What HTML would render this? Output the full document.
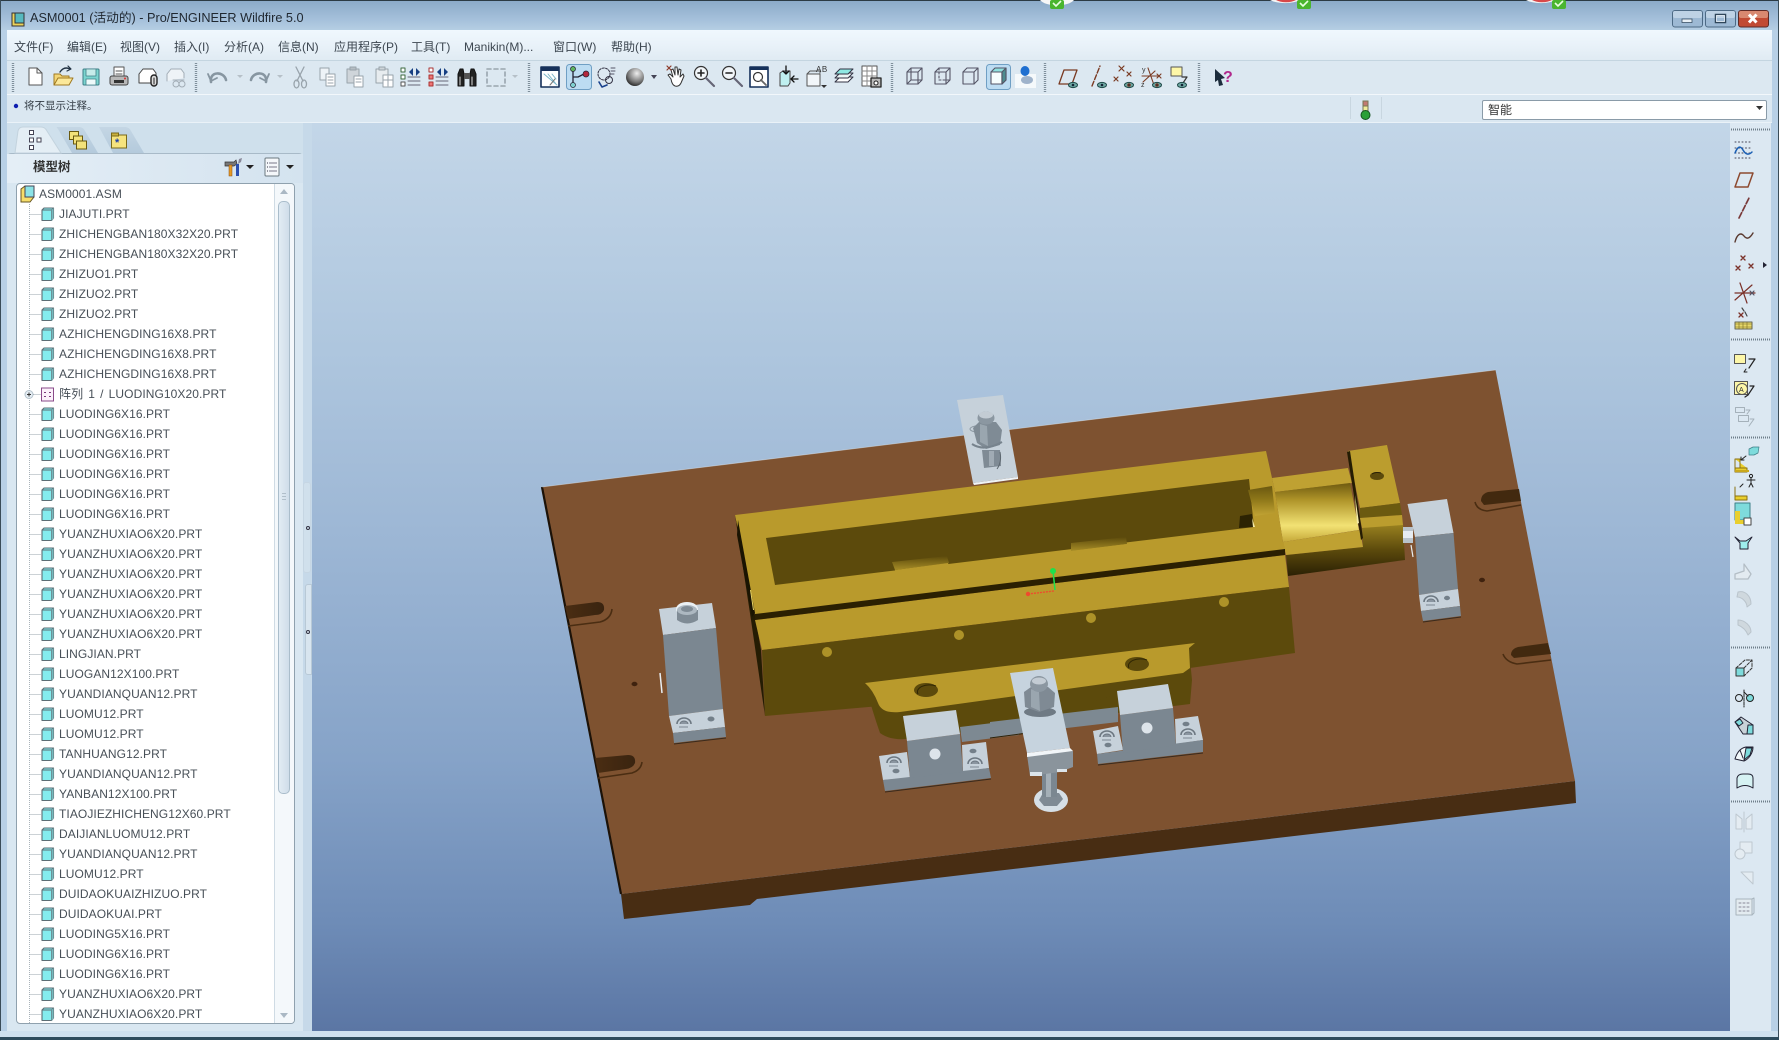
<!DOCTYPE html>
<html lang="zh"><head><meta charset="utf-8"><title>ASM0001 - Pro/ENGINEER Wildfire 5.0</title>
<style>
html,body{margin:0;padding:0;width:1779px;height:1040px;overflow:hidden;background:#b8d0e6;font-family:"Liberation Sans","Noto Sans CJK SC",sans-serif}
#root{position:absolute;left:0;top:0;width:1779px;height:1040px;overflow:hidden;filter:blur(.35px)}
.a{position:absolute}
svg{position:absolute;left:0;top:0;overflow:visible}
.m{position:absolute;top:39px;font-size:12px;line-height:17px;color:#3c4650;white-space:nowrap}
#tree div{height:20px;line-height:20px;font-size:12px;letter-spacing:.08px;color:#474f57;white-space:nowrap;padding-left:43px}
</style></head><body><div id="root">
<div class="a" style="left:0;top:0;width:1779px;height:1040px;background:#b8d0e6"></div>
<!-- title -->
<div class="a" style="left:0;top:0;width:1779px;height:30px;background:linear-gradient(#8aa9c8,#a7c2dc 70%,#b5cee3)"></div>
<div class="a" style="left:0;top:0;width:1779px;height:1px;background:#2b3a44"></div>
<div class="a" style="left:30px;top:9px;font-size:12.7px;line-height:18px;color:#1f2730;white-space:nowrap">ASM0001 (活动的) - Pro/ENGINEER Wildfire 5.0</div>
<!-- menu -->
<div class="a" style="left:7px;top:30px;width:1765px;height:30px;background:linear-gradient(#f0f8fe,#e9f2f9 50%,#e0ebf3)"></div>
<div class="a" style="left:7px;top:60px;width:1765px;height:1px;background:#c4d5e0"></div>
<div class="m" style="left:14px">文件(F)</div><div class="m" style="left:67px">编辑(E)</div><div class="m" style="left:120px">视图(V)</div><div class="m" style="left:174px">插入(I)</div><div class="m" style="left:224px">分析(A)</div><div class="m" style="left:278px">信息(N)</div><div class="m" style="left:334px">应用程序(P)</div><div class="m" style="left:411px">工具(T)</div><div class="m" style="left:464px">Manikin(M)...</div><div class="m" style="left:553px">窗口(W)</div><div class="m" style="left:611px">帮助(H)</div>
<!-- toolbar + status -->
<div class="a" style="left:7px;top:61px;width:1765px;height:33px;background:#dce8f1"></div>
<div class="a" style="left:7px;top:94px;width:1765px;height:1px;background:#f2f7fb"></div>
<div class="a" style="left:7px;top:95px;width:1765px;height:27px;background:#dae7f1"></div>
<div class="a" style="left:7px;top:122px;width:1765px;height:1px;background:#eaf2f8"></div>
<div class="a" style="left:24px;top:98px;font-size:10.5px;line-height:17px;color:#333c45;white-space:nowrap">将不显示注释。</div>
<div class="a" style="left:1482px;top:100px;width:283px;height:18px;background:#fff;border:1px solid #8a9ba8;border-radius:2px;font-size:12px;line-height:18px;color:#333;text-indent:5px">智能</div>
<!-- canvas -->
<div class="a" style="left:312px;top:123px;width:1418px;height:908px;background:linear-gradient(#c3d6e8 0,#aec6de 25%,#9db7d5 45%,#86a3c8 70%,#6e8cb7 88%,#5b76a4 100%)"></div>
<!-- right toolbar -->
<div class="a" style="left:1730px;top:123px;width:41px;height:908px;background:#dce8f2"></div>
<!-- left panel -->
<div class="a" style="left:7px;top:123px;width:296px;height:908px;background:#cfe0ec"></div>
<div class="a" style="left:303px;top:123px;width:9px;height:908px;background:#c6d9e9"></div>
<div class="a" style="left:303px;top:482px;width:8px;height:91px;background:#d0e0ec;border-radius:3px;border:1px solid #c6d6e3;box-sizing:border-box"></div>
<div class="a" style="left:305px;top:584px;width:7px;height:91px;background:#d8e5ef;border-radius:3px 0 0 3px;border:1px solid #b8c9d6;box-sizing:border-box"></div>
<div class="a" style="left:7px;top:153px;width:296px;height:878px;background:#d9e7f1;border-top:1px solid #a8bac8;border-radius:4px 4px 0 0;box-sizing:border-box"></div>
<div class="a" style="left:7px;top:154px;width:296px;height:29px;background:linear-gradient(90deg,#e4eef6,#d4e3ef)"></div>
<div class="a" style="left:33px;top:158px;font-size:12.5px;line-height:18px;font-weight:bold;color:#333">模型树</div>
<div class="a" style="left:16px;top:183px;width:279px;height:841px;background:#fff;border:1px solid #8fa1ae;border-radius:4px;box-sizing:border-box"></div>
<div class="a" style="left:274px;top:184px;width:20px;height:839px;background:#f4f8fb;border-left:1px solid #cfdbe4;box-sizing:border-box;border-radius:0 3px 3px 0"></div>
<div class="a" style="left:278px;top:201px;width:12px;height:593px;background:linear-gradient(90deg,#e2ecf4,#cfdde9);border:1px solid #aabdcb;border-radius:5px;box-sizing:border-box"></div>
<div id="tree" class="a" style="left:16px;top:184px;width:258px;height:839px;overflow:hidden">
<div style="padding-left:23px">ASM0001.ASM</div>
<div>JIAJUTI.PRT</div><div>ZHICHENGBAN180X32X20.PRT</div><div>ZHICHENGBAN180X32X20.PRT</div><div>ZHIZUO1.PRT</div><div>ZHIZUO2.PRT</div><div>ZHIZUO2.PRT</div><div>AZHICHENGDING16X8.PRT</div><div>AZHICHENGDING16X8.PRT</div><div>AZHICHENGDING16X8.PRT</div><div style="word-spacing:1.7px">阵列 1 / LUODING10X20.PRT</div><div>LUODING6X16.PRT</div><div>LUODING6X16.PRT</div><div>LUODING6X16.PRT</div><div>LUODING6X16.PRT</div><div>LUODING6X16.PRT</div><div>LUODING6X16.PRT</div><div>YUANZHUXIAO6X20.PRT</div><div>YUANZHUXIAO6X20.PRT</div><div>YUANZHUXIAO6X20.PRT</div><div>YUANZHUXIAO6X20.PRT</div><div>YUANZHUXIAO6X20.PRT</div><div>YUANZHUXIAO6X20.PRT</div><div>LINGJIAN.PRT</div><div>LUOGAN12X100.PRT</div><div>YUANDIANQUAN12.PRT</div><div>LUOMU12.PRT</div><div>LUOMU12.PRT</div><div>TANHUANG12.PRT</div><div>YUANDIANQUAN12.PRT</div><div>YANBAN12X100.PRT</div><div>TIAOJIEZHICHENG12X60.PRT</div><div>DAIJIANLUOMU12.PRT</div><div>YUANDIANQUAN12.PRT</div><div>LUOMU12.PRT</div><div>DUIDAOKUAIZHIZUO.PRT</div><div>DUIDAOKUAI.PRT</div><div>LUODING5X16.PRT</div><div>LUODING6X16.PRT</div><div>LUODING6X16.PRT</div><div>YUANZHUXIAO6X20.PRT</div><div>YUANZHUXIAO6X20.PRT</div>
</div>

<svg width="1779" height="1040" viewBox="0 0 1779 1040" xmlns="http://www.w3.org/2000/svg">
<defs>
<linearGradient id="cyl" x1="0" y1="0" x2="0" y2="1"><stop offset="0" stop-color="#6e5a10"/><stop offset=".28" stop-color="#ae9328"/><stop offset=".72" stop-color="#f2e274"/><stop offset="1" stop-color="#c5a838"/></linearGradient>
<linearGradient id="bod" x1="0" y1="0" x2="0" y2="1"><stop offset="0" stop-color="#9a8220"/><stop offset=".5" stop-color="#5c4a0c"/><stop offset="1" stop-color="#2a2004"/></linearGradient>
<linearGradient id="bump" x1="0" y1="0" x2="0" y2="1"><stop offset="0" stop-color="#5c4a0c"/><stop offset="1" stop-color="#a68c26"/></linearGradient>
<linearGradient id="pc" x1="0" y1="0" x2="0" y2="1"><stop offset="0" stop-color="#6b5810"/><stop offset=".45" stop-color="#8e7719"/><stop offset="1" stop-color="#c2a434"/></linearGradient>
<linearGradient id="sl" x1="0" y1="0" x2="1" y2="0"><stop offset="0" stop-color="#4a2d12"/><stop offset="1" stop-color="#3a2410"/></linearGradient>
<radialGradient id="sp" cx=".6" cy=".3" r=".8"><stop offset="0" stop-color="#eee"/><stop offset=".6" stop-color="#777"/><stop offset="1" stop-color="#111"/></radialGradient>
<linearGradient id="tb" x1="0" y1="0" x2="0" y2="1"><stop offset="0" stop-color="#c4d6e4"/><stop offset="1" stop-color="#b4cadc"/></linearGradient>
<g id="c"><path d="M29.5 0H41" stroke="#9aa5ad" stroke-dasharray="1 1" fill="none"/><path d="M42 -4.5l2-2h9.5v10l-2 2.5H42z" fill="#84ecee" stroke="#5d6d74" stroke-width="1.1" stroke-linejoin="round"/><path d="M51.5 -4.5V6.5M42 -4.5h9.5l2-2" fill="none" stroke="#5d6d74"/><path d="M51.5 -4.5l2-2V4l-2 2.5z" fill="#77b9bd"/></g>
<g id="eye"><ellipse cx="0" cy="0" rx="4.5" ry="2.6" fill="#6fa8a4" stroke="#1f4a48" stroke-width="1"/><circle r="1.3" fill="#123"/></g>
<g id="boltf"><path d="M-7 2a7 6 0 0 1 14 0" fill="none" stroke="#6c7781" stroke-width="1.6"/><path d="M-4 2a4 3 0 0 1 8 0" fill="#8a95a0" stroke="#6c7781"/><path d="M-5 5h9" stroke="#7c8791"/></g>
</defs>

<!-- notification tips on top edge -->
<g>
<path d="M1040 0a18 8 0 0 0 34 0z" fill="#f7f7f7"/>
<rect x="1050" y="0" width="14" height="9" rx="2" fill="#4ab52e"/><path d="M1053 3l3 3 5-5" stroke="#e8ffe0" stroke-width="1.6" fill="none"/>
<path d="M1270 0a18 7 0 0 0 30 0z" fill="#f5f5f5"/><path d="M1276 0a12 5 0 0 0 20 0z" fill="#d8484a"/>
<rect x="1297" y="0" width="14" height="9" rx="2" fill="#4ab52e"/><path d="M1300 3l3 3 5-5" stroke="#e8ffe0" stroke-width="1.6" fill="none"/>
<path d="M1526 0a18 7 0 0 0 30 0z" fill="#f5f5f5"/><path d="M1532 0a12 5 0 0 0 20 0z" fill="#d8484a"/>
<rect x="1552" y="0" width="14" height="9" rx="2" fill="#4ab52e"/><path d="M1555 3l3 3 5-5" stroke="#e8ffe0" stroke-width="1.6" fill="none"/>
</g>
<!-- title icon -->
<rect x="12" y="13" width="12" height="13" fill="#ecd35a" stroke="#333"/><rect x="15" y="13" width="9" height="10" fill="#56b9bf" stroke="#333"/>
<!-- window controls -->
<g>
<rect x="1672.5" y="10.5" width="30" height="16.5" rx="2.5" fill="#9db9d4" stroke="#4d6a85"/><rect x="1673" y="11" width="29" height="7" rx="2" fill="#bed2e5"/><rect x="1682" y="19" width="10" height="3.5" fill="#e8f0f6" stroke="#3b5267" stroke-width=".8"/>
<rect x="1705.5" y="10.5" width="30" height="16.5" rx="2.5" fill="#9db9d4" stroke="#4d6a85"/><rect x="1706" y="11" width="29" height="7" rx="2" fill="#bed2e5"/><rect x="1715.5" y="14.5" width="10" height="8" fill="none" stroke="#2f465a" stroke-width="1.5"/><rect x="1716.5" y="15.5" width="8" height="6" fill="none" stroke="#eaf2f8" stroke-width=".8"/>
<rect x="1738.5" y="10.5" width="30" height="16.5" rx="2.5" fill="#c14a33" stroke="#5d2a26"/><rect x="1739" y="11" width="29" height="7" rx="2" fill="#d88870"/><path d="M1749 14.5l7.5 8M1756.5 14.5l-7.5 8" stroke="#fff" stroke-width="3"/>
</g>

<!-- toolbar separators -->
<g stroke="#7f8f9b" stroke-width="2.4" stroke-dasharray="1 1" fill="none">
<path d="M13 63v29M196 63v29M529 63v29M892 63v29M1045 63v29M1199 63v29"/>
</g>
<rect x="566.5" y="64.5" width="25" height="25" rx="3" fill="#bcdcf2" stroke="#6f9fc4"/>
<rect x="986.5" y="64.5" width="24" height="25" rx="3" fill="#bcdcf2" stroke="#6f9fc4"/>
<!-- toolbar icons -->
<g stroke-linejoin="round" stroke-linecap="round" fill="none">
<g transform="translate(35,77)"><path d="M-6-9h8l5 5V8H-6z" fill="#fff" stroke="#555" stroke-width="1"/><path d="M2-9v5h5" stroke="#555"/></g>
<g transform="translate(63,77)"><path d="M-9 8V-3h6l2 2H6V8z" fill="#f3d676" stroke="#a07a22"/><path d="M-9 8l4-7H10L6 8z" fill="#fbe89a" stroke="#a07a22"/><path d="M-3-5Q1-11 7-8" stroke="#234" stroke-width="1.4"/><path d="M5-11l3 3-4 2" stroke="#234" stroke-width="1.2"/></g>
<g transform="translate(91,77)"><rect x="-8" y="-8" width="16" height="16" rx="1" fill="#7bd4cf" stroke="#3e7e86"/><rect x="-5" y="-8" width="10" height="7" fill="#c6ecea" stroke="#3e7e86" stroke-width=".8"/><rect x="-5" y="2" width="10" height="6" fill="#eefafa" stroke="#3e7e86" stroke-width=".8"/></g>
<g transform="translate(119,77)"><rect x="-5" y="-10" width="10" height="10" fill="#fff" stroke="#555"/><path d="M-3-6h6M-3-3h6" stroke="#555"/><rect x="-9" y="-1" width="18" height="9" rx="2" fill="#b8b8b8" stroke="#444"/><rect x="-5" y="3" width="10" height="3" fill="#333"/><circle cx="6" cy="1.5" r="1" fill="#d33"/></g>
<g transform="translate(148,77)"><path d="M-9 6V-3l4-5H5l3 4v10z" fill="#fff" stroke="#444"/><rect x="3" y="-2" width="6" height="11" rx="3" fill="#ddd" stroke="#222" stroke-width="1.4"/><path d="M6 1v6" stroke="#222"/></g>
<g transform="translate(176,77)" stroke="#a2adb6"><path d="M-9 4V-3l4-5H5l3 4v5" fill="#eef3f7"/><circle cx="0" cy="7" r="3"/><circle cx="6" cy="7" r="3"/><path d="M-3 3H8"/></g>
<g transform="translate(218,77)" stroke="#8796a1" stroke-width="2.6"><path d="M-7 5C-9-6 6-6 8 3"/><path d="M-10 -3l3 7 6-3" stroke-width="1.8"/></g><path d="M237 75l3 3 3-3z" fill="#b6c0c8"/>
<g transform="translate(259,77)" stroke="#8796a1" stroke-width="2.6"><path d="M7 5C9-6-6-6-8 3"/><path d="M10 -3l-3 7-6-3" stroke-width="1.8"/></g><path d="M277 75l3 3 3-3z" fill="#b6c0c8"/>
<g transform="translate(300,77)" stroke="#98a3ab" stroke-width="1.3"><path d="M-4-10L3 4M4-10L-3 4"/><ellipse cx="-3.5" cy="7" rx="2.5" ry="4"/><ellipse cx="4" cy="7" rx="2.5" ry="4"/></g>
<g transform="translate(328,77)" stroke="#98a3ab"><rect x="-8" y="-9" width="9" height="12" fill="#eef3f7"/><rect x="-2" y="-3" width="9" height="12" fill="#fff"/><path d="M0 0h5M0 3h5M0 6h5"/></g>
<g transform="translate(355,77)" stroke="#98a3ab"><rect x="-8" y="-8" width="12" height="14" fill="#cfd5da"/><rect x="-5" y="-10" width="6" height="3" fill="#b5bdc3"/><rect x="-1" y="-1" width="9" height="11" fill="#fff"/><path d="M1 2h5M1 5h5"/></g>
<g transform="translate(384,77)" stroke="#98a3ab"><rect x="-8" y="-8" width="12" height="14" fill="#e7ecef"/><rect x="-5" y="-10" width="6" height="3" fill="#cdd4d9"/><rect x="-1" y="-2" width="10" height="12" fill="#fff"/><path d="M4-1v10M-1 3h10"/></g>
<g transform="translate(411,77)"><rect x="-10" y="-9" width="4" height="4" fill="#fff" stroke="#3e6a40"/><rect x="-10" y="-2" width="4" height="4" fill="#fff" stroke="#3e6a40"/><rect x="-10" y="5" width="4" height="4" fill="#fff" stroke="#555"/><path d="M-3 0h12M-3 4h12M-3 8h12" stroke="#667"/><path d="M-2-5l4-4v8zM9-5L5-9v8z" fill="#163f82"/></g>
<g transform="translate(439,77)"><rect x="-10" y="-9" width="4" height="4" fill="#fff" stroke="#a33"/><rect x="-10" y="-2" width="4" height="4" fill="#e77" stroke="#a33"/><rect x="-10" y="5" width="4" height="4" fill="#e77" stroke="#a33"/><path d="M-3 0h12M-3 4h12M-3 8h12" stroke="#667"/><path d="M-2-5l4-4v8zM9-5L5-9v8z" fill="#163f82"/></g>
<g transform="translate(467,77)"><path d="M-9 9V-3l2-5h3l1 5V9zM3 9V-3l1-5h3l2 5V9z" fill="#222" stroke="#111"/><rect x="-3" y="-4" width="6" height="6" fill="#555"/><path d="M-7 8V0M5 8V0" stroke="#ddd"/></g>
<g transform="translate(496,77)" stroke="#99a5ae" stroke-width="1.6" stroke-dasharray="4 3"><rect x="-9" y="-8" width="18" height="17"/></g><path d="M512 75l3 3 3-3z" fill="#b6c0c8"/>
<g transform="translate(550,77)"><rect x="-9" y="-10" width="18" height="20" fill="#fff" stroke="#15305a" stroke-width="1.6"/><rect x="-9" y="-10" width="18" height="4" fill="#15305a"/><path d="M-6 -3L7 8M-2-3L6 7M2-3L6 2" stroke="#7cb6c8"/><path d="M0 8l5-6" stroke="#777"/></g>
<g transform="translate(579,77)"><path d="M-6-6v6h5M-6 0v6M-1 0L5-3" stroke="#223" stroke-width="1.3"/><circle cx="-6" cy="-8" r="2.5" fill="#5fb35f" stroke="#223" stroke-width=".7"/><circle cx="-6" cy="8" r="2.5" fill="#7fd0d0" stroke="#223" stroke-width=".7"/><circle cx="7" cy="-3" r="3" fill="#b3273c" stroke="#223" stroke-width=".7"/></g>
<g transform="translate(607,77)"><circle cx="-3" cy="-3" r="6" stroke="#334" stroke-dasharray="2 1.3"/><path d="M4-9h4M4-6h4M4-3h3" stroke="#556"/><path d="M-8 5l3 5 5-2" stroke="#19418c" stroke-width="1.6"/><circle cx="2" cy="3" r="3.5" stroke="#334"/></g>
<circle cx="635" cy="77" r="9" fill="url(#sp)"/><path d="M651 75l6 0-3 4z" fill="#445"/>
<g transform="translate(676,77)"><path d="M-5 2l-3-4 2-1 3 3-2-7 2-1 2 6 0-8h2l1 8 1-6 2 1-1 7 3-3 1 2-3 7q-2 4-6 3-3-1-4-7z" fill="#fff" stroke="#333" stroke-width="1"/><path d="M-9-11l4 4M-5-11l-4 4" stroke="#8d3a2a" stroke-width="1.2"/></g>
<g transform="translate(704,77)"><circle cx="-3" cy="-4" r="6.5" fill="#f2f6f9" stroke="#333" stroke-width="1.2"/><path d="M-6-4h6M-3-7v6" stroke="#222" stroke-width="1.6"/><path d="M2 1l8 8" stroke="#667" stroke-width="2.2"/></g>
<g transform="translate(732,77)"><circle cx="-3" cy="-4" r="6.5" fill="#f2f6f9" stroke="#333" stroke-width="1.2"/><path d="M-6-4h6" stroke="#222" stroke-width="1.6"/><path d="M2 1l8 8" stroke="#667" stroke-width="2.2"/></g>
<g transform="translate(759,77)"><rect x="-9" y="-10" width="18" height="20" fill="#fff" stroke="#15305a" stroke-width="1.6"/><rect x="-9" y="-10" width="18" height="3" fill="#15305a"/><circle cx="-1" cy="0" r="4.5" stroke="#333" stroke-width="1.2"/><path d="M2 3l5 5" stroke="#666" stroke-width="1.8"/></g>
<g transform="translate(787,77)"><path d="M-7-4l3-2h7v12l-2 3h-8z" fill="#bff0f0" stroke="#444"/><path d="M-1-11v8M-4-6l3 3 3-3M4 2h7M7-1l-3 3 3 3" stroke="#111" stroke-width="1.3"/></g>
<g transform="translate(816,77)"><rect x="-9" y="-3" width="13" height="12" fill="#f2f6f9" stroke="#555"/><path d="M-9-3l3-3h10v2" stroke="#555"/><text x="0" y="-5" font-size="8" fill="#333" font-family="Liberation Sans" style="letter-spacing:.5px">AB</text><path d="M5 8h6l-3 3z" fill="#333"/></g>
<g transform="translate(844,77)" stroke="#334"><path d="M-9 5l5-5H9L4 5z" fill="#fff"/><path d="M-9 1l5-5H9L4 1z" fill="#eaf5f5"/><path d="M-9-3l5-5H9L4-3z" fill="#8fe9e3"/></g>
<g transform="translate(871,77)"><rect x="-9" y="-11" width="15" height="20" fill="#fff" stroke="#555"/><path d="M-9-6H6M-9-1H6M-9 4H6M-4-11V9M1-11V9" stroke="#888"/><rect x="0" y="1" width="10" height="9" fill="#bbb" stroke="#222" stroke-width="1.3"/><circle cx="5" cy="6" r="2" fill="#fff" stroke="#222"/></g>
<g stroke="#556" stroke-width="1.1">
<g transform="translate(914,77)"><rect x="-7" y="-5" width="11" height="12"/><path d="M-7-5l4-4H8V3L4 7M4-5l4-4M-3-9V3h11M-3 3l-4 4"/></g>
<g transform="translate(942,77)"><rect x="-7" y="-5" width="11" height="12"/><path d="M-7-5l4-4H8V3L4 7M4-5l4-4" /><path d="M-3-9V3h11" stroke-dasharray="2 2"/></g>
<g transform="translate(970,77)"><rect x="-7" y="-5" width="11" height="12"/><path d="M-7-5l4-4H8V3L4 7M4-5l4-4"/></g>
<g transform="translate(998,77)"><rect x="-7" y="-5" width="11" height="12" fill="#f5fdfd"/><path d="M-7-5l4-4H8V3L4 7V-5z" fill="#8fe0de"/><path d="M4-5l4-4V3L4 7z" fill="#4e8c8f"/></g>
</g>
<g transform="translate(1026,77)"><rect x="-11" y="-3" width="21" height="14" fill="#f5f9fb"/><ellipse cx="-1" cy="-6" rx="4.5" ry="5" fill="#1f6fd0"/><ellipse cx="1" cy="3" rx="6" ry="4" fill="#9fb3cb"/></g>
<g transform="translate(1068,77)"><path d="M-9 7l5-14H9L4 7z" stroke="#7a3a22" stroke-width="1.3"/><use href="#eye" x="5" y="8"/></g>
<g transform="translate(1097,77)"><path d="M-5 9L3-11" stroke="#7a3a22" stroke-width="1.4" stroke-dasharray="5 2"/><use href="#eye" x="5" y="8"/></g>
<g transform="translate(1124,77)" stroke="#7a3a22" stroke-width="1.2"><path d="M-5-11l5 5M0-11l-5 5M3-5l4 4M7-5l-4 4M-10 0l4 4M-6 0l-4 4"/><use href="#eye" x="5" y="8" stroke-width="1"/></g>
<g transform="translate(1151,77)" stroke="#7a3a22" stroke-width="1.1"><path d="M-3-9L3 8M4-6L-8 5M-9-1H8"/><text x="-9" y="-5" font-size="7" fill="#333" stroke="none" font-family="Liberation Sans">y</text><text x="-10" y="10" font-size="7" fill="#333" stroke="none" font-family="Liberation Sans">z</text><path d="M6-3l4 4M10-3l-4 4"/><use href="#eye" x="6" y="8" stroke-width="1"/></g>
<g transform="translate(1180,77)"><rect x="-9" y="-10" width="11" height="9" fill="#fdf7a8" stroke="#555"/><path d="M2 0h5l-4 6" stroke="#333" stroke-width="1.2"/><use href="#eye" x="2" y="8"/></g>
<g transform="translate(1222,77)"><path d="M-7-8L3 1 -1 2 1 8-3 9-4 3-7 5z" fill="#1c2c3c"/><text x="1" y="5" font-size="16" font-weight="bold" fill="#b0298c" font-family="Liberation Sans">?</text></g>
</g>
<!-- status bullet / traffic light -->
<circle cx="16" cy="106" r="2.2" fill="#0e1fb0"/>
<path d="M1350.5 97v22M1381.5 97v22" stroke="#c8d6e0"/>
<rect x="1363" y="101" width="5" height="5" fill="#c27a72" stroke="#775"/><rect x="1363" y="106" width="5" height="5" fill="#f0ec9a" stroke="#775"/><circle cx="1365.5" cy="115" r="4.5" fill="#2aa038" stroke="#14521f"/>
<path d="M1756 106h7l-3.5 4z" fill="#333"/>

<!-- panel tabs -->
<path d="M15 153l3-22q1-4 5-4h18q4 0 6 4l14 22z" fill="#e4eef5" stroke="#c3d3de"/>
<path d="M57 127q-1 0 1 2l14 24h26l-13-22q-2-4-6-4z" fill="url(#tb)"/>
<path d="M99 127l14 26h31l-13-22q-2-4-6-4z" fill="url(#tb)"/>
<g stroke="#445" fill="#fff"><rect x="29.5" y="130.5" width="4" height="4"/><rect x="29.5" y="138" width="4" height="4"/><rect x="29.5" y="145.5" width="4" height="4"/><rect x="37" y="138" width="4" height="4"/></g>
<g stroke="#6a5a10" fill="#f3e27a"><rect x="69.5" y="131.5" width="9" height="8"/><rect x="73.5" y="136" width="9" height="8"/><rect x="76.5" y="141" width="10" height="8"/></g>
<rect x="111.5" y="135" width="15" height="13" fill="#f6e47e" stroke="#7a6a1a"/><rect x="111.5" y="133" width="7" height="3" fill="#c9b03e" stroke="#7a6a1a"/><text x="115" y="146" font-size="11" font-weight="bold" fill="#1f3fa8" font-family="Liberation Sans">*</text>
<!-- panel header icons -->
<g transform="translate(233,167)"><path d="M-8-5h9l2-2 1 4-3 2h-9z" fill="#777" stroke="#333" stroke-width=".7"/><rect x="-4" y="-2" width="3" height="11" fill="#e59a25" stroke="#8a4a10" stroke-width=".5"/><rect x="3" y="-3" width="3" height="12" fill="#2a4fb0"/><path d="M5-3l1-5 3-1-1 4z" fill="#889"/></g>
<path d="M246 165h8l-4 4z" fill="#222"/>
<g transform="translate(272,167)"><rect x="-7" y="-9" width="14" height="18" rx="1" fill="#f4f7fa" stroke="#6b7880"/><path d="M-3-4h8M-3 0h8M-3 4h8" stroke="#778"/><path d="M-5-4h1M-5 0h1M-5 4h1" stroke="#334"/></g>
<path d="M286 165h8l-4 4z" fill="#222"/>
<!-- scrollbar arrows -->
<path d="M284 189l-4 5h8z" fill="#aab8c4"/><path d="M280 1013h8l-4 5z" fill="#aab8c4"/>
<path d="M283 493v1M283 496v1M283 499v1M285 493v1M285 496v1M285 499v1" stroke="#8899a6"/>
<circle cx="308" cy="528" r="1.5" fill="none" stroke="#334"/><circle cx="308" cy="632" r="1.5" fill="none" stroke="#334"/>

<!-- tree decorations -->
<path d="M29.5 204V1023" stroke="#a9b3ba" stroke-dasharray="1 1"/>
<g transform="translate(19,194)"><path d="M2-5L6-8h9v11l-4 5H2z" fill="#f6dd6a" stroke="#665520"/><path d="M6-8h9v11H6z" fill="#8ce3e6" stroke="#445"/></g>
<use href="#c" y="214.5"/><use href="#c" y="234.5"/><use href="#c" y="254.5"/><use href="#c" y="274.5"/><use href="#c" y="294.5"/><use href="#c" y="314.5"/><use href="#c" y="334.5"/><use href="#c" y="354.5"/><use href="#c" y="374.5"/>
<g transform="translate(0,394.5)"><path d="M29.5 0H41" stroke="#9aa5ad" stroke-dasharray="1 1"/><rect x="41.5" y="-6.5" width="12" height="13" fill="#fbf1fa" stroke="#8a4a8a"/><path d="M44-2h2M49-2h2M44 2h2M49 2h2" stroke="#7a3a7a"/><rect x="25" y="-4" width="8" height="8" rx="4" fill="#e5edf3" stroke="#b4c2cc"/><path d="M27 0h4M29-2v4" stroke="#333"/></g>
<use href="#c" y="414.5"/><use href="#c" y="434.5"/><use href="#c" y="454.5"/><use href="#c" y="474.5"/><use href="#c" y="494.5"/><use href="#c" y="514.5"/><use href="#c" y="534.5"/><use href="#c" y="554.5"/><use href="#c" y="574.5"/><use href="#c" y="594.5"/><use href="#c" y="614.5"/><use href="#c" y="634.5"/><use href="#c" y="654.5"/><use href="#c" y="674.5"/><use href="#c" y="694.5"/><use href="#c" y="714.5"/><use href="#c" y="734.5"/><use href="#c" y="754.5"/><use href="#c" y="774.5"/><use href="#c" y="794.5"/><use href="#c" y="814.5"/><use href="#c" y="834.5"/><use href="#c" y="854.5"/><use href="#c" y="874.5"/><use href="#c" y="894.5"/><use href="#c" y="914.5"/><use href="#c" y="934.5"/><use href="#c" y="954.5"/><use href="#c" y="974.5"/><use href="#c" y="994.5"/><use href="#c" y="1014.5"/>

<!-- right toolbar icons -->
<path d="M1731 129.5h40M1731 339.5h40M1731 437.5h40M1731 647.5h40M1731 801.5h40" stroke="#6e7e8a" stroke-width="2" stroke-dasharray="1 1"/>
<g fill="none" stroke-linejoin="round" stroke-linecap="round">
<g transform="translate(1743,150)"><path d="M-8-8h16M-8-2h16M-8 3h16M-8 8h16" stroke="#445" stroke-width="1" stroke-dasharray="1 2.5"/><path d="M-8 3Q-4-7 0 0T9 2" stroke="#1b5fb4" stroke-width="1.5"/></g>
<path d="M1735 187l5-14h13l-5 14z" stroke="#8d4a30" stroke-width="1.5"/>
<path d="M1739 218l10-20" stroke="#7a3a3a" stroke-width="1.7" stroke-dasharray="6 2"/>
<path d="M1735 242c2-8 6-10 9-6s6 2 9-3" stroke="#5a3a30" stroke-width="1.4"/>
<g stroke="#7a3028" stroke-width="1.4"><path d="M1741 256l4 4M1745 256l-4 4M1749 264l4 4M1753 264l-4 4M1736 266l4 4M1740 266l-4 4"/></g><path d="M1763 262l4 3-4 3z" fill="#223"/>
<g stroke="#7a3028" stroke-width="1.2"><path d="M1740 283l7 20M1752 285l-17 15M1735 293h20"/><path d="M1750 291l4 4M1754 291l-4 4" stroke="#556"/></g>
<g><rect x="1735" y="322" width="17" height="7" fill="#e8d96b" stroke="#665"/><path d="M1735 324h17M1735 327h17M1739 322v7M1743 322v7M1747 322v7" stroke="#776a22" stroke-width=".6"/><path d="M1739 313l4 4M1743 313l-4 4" stroke="#7a3028" stroke-width="1.3"/><path d="M1745 312l2 4M1742 308l2 3" stroke="#444" stroke-width="1.2"/></g>
<g><rect x="1734.5" y="354.5" width="11" height="9" fill="#fdf7a8" stroke="#555"/><path d="M1749 359h6l-6 9" stroke="#222" stroke-width="1.2"/><path d="M1746 369l-2 3 3 0" stroke="#222"/></g>
<g><rect x="1734.5" y="381.5" width="13" height="13" fill="#fdf7a8" stroke="#555"/><circle cx="1742" cy="389" r="5.5" stroke="#555"/><text x="1739" y="392" font-size="7" fill="#333" font-family="Liberation Sans">A</text><path d="M1750 386h4l-6 9M1745 397l3-2" stroke="#222" stroke-width="1.2"/></g>
<g stroke="#a5b1ba"><rect x="1735.5" y="407.5" width="9" height="5"/><rect x="1738.5" y="415.5" width="10" height="6"/><path d="M1746 410h4l-3 4M1750 419h4l-5 7"/></g>
<g><path d="M1735 459v9h12v4h-12zM1735 459h5v9h7" fill="#e9cf2e" stroke="#8a7010"/><path d="M1735 470h14v2h-14z" fill="#c9a81c"/><path d="M1749 449l4-2h6l-1 6-4 2h-5z" fill="#7edbdc" stroke="#3d7f88" stroke-width=".7"/><path d="M1746 456l-5 4M1741 457v3h3" stroke="#222"/></g>
<g><path d="M1735 487v9h12v4h-12z" fill="#e9cf2e" stroke="#8a7010"/><circle cx="1751" cy="476" r="1.6" stroke="#222"/><path d="M1751 478v5M1747 480h8M1751 483l-2 4M1751 483l2 4M1743 484l-3 3" stroke="#222"/></g>
<g><path d="M1735 503h15v17h-15z" fill="#7edbdc" stroke="#3d7f88"/><path d="M1735 511v13h10v-4h-5v-9z" fill="#e9cf2e"/><path d="M1744 518h7v7h-7z" fill="#fff" stroke="#444"/></g>
<g><path d="M1735 537l5 4h6l6-4-4 6v6h-8v-6z" fill="#9eeeed" stroke="#223"/></g>
<path d="M1735 574l9-3v-7l7 10-3 5H1735z" stroke="#b4bec6" stroke-width="1.3" fill="#e3ebf1"/>
<path d="M1738 592c7-2 13 4 13 12l-4 3c0-5-5-10-10-10z" fill="#cfd8de" stroke="#bac4cc"/>
<path d="M1738 620c7 0 13 6 13 12l-3 3c-2-5-5-8-10-10z" fill="#cfd8de" stroke="#bac4cc"/>
<g stroke="#333" stroke-width="1"><rect x="1736" y="668" width="8" height="8" fill="#7edbdc"/><path d="M1736 668l9-8h7v8l-8 8M1744 668l8-8" stroke-dasharray="3 1.5"/></g>
<g stroke="#222"><path d="M1744 690v17" stroke-dasharray="3 1"/><circle cx="1739" cy="698" r="3.5"/><circle cx="1750" cy="698" r="3.5" fill="#7edbdc"/><path d="M1744 692l4 4"/></g>
<g stroke="#223" transform="translate(0,5)"><path d="M1735 717l6-5 12 8v9h-10z" fill="#c9d2d8"/><path d="M1735 717l5-3 3 4-4 3z M1748 720l5 0v9h-6z" fill="#7edbdc"/></g>
<g stroke="#223"><path d="M1735 759c2-7 6-11 11-12l7 0c0 6-4 12-9 14z" fill="#f2f8fa"/><path d="M1746 748h6l-2 7-6 5z" fill="#7edbdc"/><path d="M1740 750l3 8"/></g>
<path d="M1737 788v-10q1-4 6-4h5q5 0 5 4v10q-8-5-16 0z" fill="#d6f2f3" stroke="#223"/>
<g stroke="#bec8d0"><path d="M1744 812v20M1736 814l6 5v10h-6zM1752 814l-6 5v10h6z" fill="#e4ecf2"/></g>
<g stroke="#bec8d0"><rect x="1740" y="842" width="12" height="11" fill="#e4ecf2"/><circle cx="1740" cy="854" r="5" fill="#e4ecf2"/></g>
<path d="M1741 872h12v12z" stroke="#bec8d0" fill="#e4ecf2"/>
<g stroke="#a8b4bd"><rect x="1736" y="899" width="16" height="16" fill="#e3ebf0"/><path d="M1752 899l2-1v15l-2 2" /><path d="M1739 903h2M1743 903h2M1747 903h2M1739 907h2M1743 907h2M1747 907h2M1739 911h2M1743 911h2M1747 911h2" stroke="#889"/></g>
</g>

<!-- ================= 3D MODEL ================= -->
<g>
<!-- plate -->
<path d="M621 894L1575 781L1576 803L757 899L750 905L624 919z" fill="#482d13"/>
<path d="M542 487L1495.5 370L1575 781L621 894z" fill="#7e5230"/>
<path d="M542 487L621 894" stroke="#1c1208" stroke-width="2.2"/>
<path d="M542 487L1495.5 370" stroke="#dfe7ee" stroke-width=".8" stroke-opacity=".5"/>
<!-- slots -->
<path d="M565 606L597 602Q605 602 604 610Q602 615 595 615L568 619z" fill="url(#sl)"/><path d="M568 626L600 622Q611 619 612 609" stroke="#4a2d12" stroke-width="1.6" fill="none"/>
<path d="M595 758L628 755Q636 755 635 763Q633 768 626 769L598 773z" fill="url(#sl)"/><path d="M598 778L632 773Q641 770 642 762" stroke="#4a2d12" stroke-width="1.6" fill="none"/>
<path d="M1519 489L1488 492Q1481 494 1481 501L1484 505L1521 501z" fill="#42290f"/><path d="M1521 505L1487 511Q1477 510 1475 502" stroke="#4a2d12" stroke-width="1.6" fill="none"/>
<path d="M1548 643L1518 647Q1511 649 1511 655L1514 658L1551 654z" fill="#42290f"/><path d="M1551 660L1517 664Q1506 662 1503 654" stroke="#4a2d12" stroke-width="1.6" fill="none"/>
<ellipse cx="634.5" cy="684" rx="3" ry="2.2" fill="#3f220e"/><ellipse cx="1482" cy="580" rx="3" ry="2.2" fill="#3f220e"/>

<!-- top clamp -->
<path d="M957 400L1003 395L1018 477L973 483z" fill="#c6d1da"/><path d="M973 483L1018 477L1018 479L974 485z" fill="#eef3f7"/>
<ellipse cx="985" cy="429" rx="15" ry="4" fill="none" stroke="#8a96a0"/><path d="M973 428l6-6h17l6 8-2 15-14 4-9-6z" fill="#7f8b95"/><path d="M980 424l7 2 1 20-8-4z" fill="#9aa6af"/><ellipse cx="986" cy="418" rx="8.5" ry="6.5" fill="#8b97a1"/><ellipse cx="986" cy="415" rx="7" ry="3.5" fill="#c3ccd4"/>
<path d="M982 450h18l1 16-17 2z" fill="#7f8b95"/><path d="M989 451h5v15h-5z" fill="#a0abb4"/><path d="M972 444q12 8 30-2" fill="none" stroke="#77838d" stroke-width="2"/><path d="M1000 452q2 10-3 17" fill="none" stroke="#5c666e" stroke-width="1"/>

<!-- right-hand piece: body, cylinder, end block -->
<path d="M1286 555L1363 547L1362 528L1403 524L1405 560L1288 576z" fill="url(#bod)"/>
<path d="M1272 478L1348 468L1352 483L1275 492z" fill="#bfa132"/>
<path d="M1275 492L1350 483L1359 530L1283 542z" fill="url(#cyl)"/>
<path d="M1283 542L1360 530L1363 547L1286 555z" fill="#bfa132"/>
<path d="M1348 451L1387 445L1400 503L1360 508z" fill="#bb9d2e"/>
<path d="M1347 452L1350 451L1363 538L1361 540z" fill="#241c03"/><path d="M1355 495L1359 523L1357 524z" fill="#f5eba8"/>
<path d="M1360 508L1400 503L1402 515L1360 518z" fill="#6b5a10"/>
<path d="M1360 518L1402 515L1403 525L1362 528z" fill="#bb9d2e"/>
<ellipse cx="1377" cy="476" rx="7" ry="4" fill="#5c4a0c"/><path d="M1372 474a7 4 0 0 1 9-1" stroke="#2a2106" fill="none"/>

<!-- main top yellow -->
<path d="M735 515L1266 451L1272 478L1275 492L1283 542L1286 551L755 615z" fill="#b99a2c"/>
<!-- cavity -->
<path d="M766 538L1249 479L1254 527L775 585z" fill="#5c4a0c"/>
<path d="M1248 490L1272 486L1275 513L1255 516z" fill="url(#pc)"/>
<path d="M1240 516l12-2 1 13-14 1z" fill="#2c2303"/><path d="M1252 518l3 9h-2z" fill="#f5eba8"/>
<path d="M892 562L947 556L949 563L895 570z" fill="url(#bump)"/><path d="M1071 543L1126 537L1127 544L1071 551z" fill="url(#bump)"/>
<path d="M895 570L948 563L950 568L896 574z" fill="#b99a2c"/><path d="M1071 551L1127 544L1128 549L1072 556z" fill="#b99a2c"/>
<!-- left side -->
<path d="M735 515L755 615L761 650L765 716L751 620z" fill="#241c03"/>
<path d="M738 520L755 613L752 617L737 535z" fill="#1a1402"/>
<path d="M750 590l3 20 1 0-3-20z" fill="#ecd766"/>
<!-- lower band -->
<path d="M755 620L1285 555L1289 587L762 650z" fill="#b99a2c"/>
<path d="M755 614L1285 549L1285 555L755 620z" fill="#2b2002"/>
<!-- front -->
<path d="M762 650L1289 587L1295 653L1190 668L1189 690L887 733L880 706L765 716z" fill="#5c4a0c"/>
<circle cx="827" cy="652" r="5" fill="#ad9228"/><circle cx="959" cy="635" r="5" fill="#ad9228"/><circle cx="1091" cy="618" r="5" fill="#ad9228"/><circle cx="1224" cy="602" r="5" fill="#ad9228"/>
<!-- flange -->
<path d="M865 684Q872 710 880 733Q892 742 915 738L1190 704L1192 680L1189 650L872 705z" fill="#5c4a0c"/>
<path d="M865 683L1195 643L1189 648L1190 668L1183 673L900 712Q882 714 878 703Q873 690 865 683z" fill="#b99a2c"/>
<path d="M1189 672Q1193 684 1186 692L1100 712L1092 702z" fill="#5c4a0c"/>
<ellipse cx="926" cy="690" rx="12" ry="7" fill="#5c4a0c"/><path d="M918 694a12 7 0 0 1 18-8" stroke="#2e2504" stroke-width="1" fill="none"/>
<ellipse cx="1137" cy="664" rx="12" ry="7" fill="#5c4a0c"/><path d="M1129 668a12 7 0 0 1 18-8" stroke="#2e2504" stroke-width="1" fill="none"/>
<!-- axis -->
<circle cx="1053" cy="571" r="3" fill="#1fe04c"/><path d="M1053 571L1055 590" stroke="#1fe04c" stroke-width="1.5"/><circle cx="1028" cy="594" r="2.2" fill="#ef4a2e"/><path d="M1028 594L1054 591" stroke="#ef4a2e" stroke-width="1.3" stroke-dasharray="2 1"/>

<!-- gray bars behind -->
<path d="M960 727L1017 720L1019 735L962 742z" fill="#7d8992"/>
<path d="M990 722L1118 707L1118 722L990 737z" fill="#7d8992"/>
<path d="M990 738L1065 728" stroke="#2e2106"/>

<!-- left bracket -->
<path d="M659 609L712 603L716 628L663 635z" fill="#c6d1da"/>
<path d="M663 635L716 628L723 709L669 716z" fill="#7b8791"/>
<path d="M669 716L723 709L725 727L673 733z" fill="#c6d1da"/>
<path d="M673 733L725 727L726 737L674 743z" fill="#7b8791"/><path d="M674 744L726 738" stroke="#3a2a1c"/>
<path d="M660 673l2 20" stroke="#e8eef3" stroke-width="1.5"/>
<ellipse cx="687" cy="609" rx="11" ry="7" fill="#eaf0f4"/><path d="M677 610v10q10 7 21 0v-10z" fill="#7f8b95"/><ellipse cx="687" cy="610" rx="10" ry="5" fill="#adb8c1"/><ellipse cx="687" cy="609" rx="6" ry="3" fill="#7f8b95"/>
<use href="#boltf" x="684" y="722"/><ellipse cx="711" cy="719" rx="3.5" ry="2.5" fill="#737f89"/>

<!-- right bracket -->
<path d="M1403 527h10v16h-10z" fill="#b9c3cb"/><path d="M1403 531h10v7h-10z" fill="#e6ecf1"/>
<path d="M1407.5 504L1447 499L1453.5 533L1415 537z" fill="#c6d1da"/>
<path d="M1415 537L1453.5 533L1458 589L1419 595z" fill="#7b8791"/>
<path d="M1419 595L1458 589L1460 606L1421 611z" fill="#c6d1da"/>
<path d="M1421 611L1460 606L1461 616L1423 621z" fill="#7b8791"/><path d="M1423 622L1461 617" stroke="#3a2a1c"/>
<path d="M1411 545l2 12" stroke="#e8eef3" stroke-width="1.2"/>
<use href="#boltf" x="1431" y="600"/><ellipse cx="1447" cy="598" rx="3" ry="2.2" fill="#737f89"/>

<!-- lower-left block -->
<path d="M879 756L907 752L910 778L883 780z" fill="#c6d1da"/>
<path d="M962 745L986 742L989 768L963 772z" fill="#c6d1da"/>
<path d="M883 780L989 768L991 778L885 791z" fill="#7b8791"/><path d="M885 792L991 779" stroke="#3a2a1c"/>
<path d="M907 741L960 734L963 772L910 778z" fill="#7b8791"/>
<path d="M903 716L956 710L960 734L907 741z" fill="#c6d1da"/>
<circle cx="935" cy="754" r="5.5" fill="#dde4ea"/>
<use href="#boltf" x="894" y="761"/><ellipse cx="896" cy="771" rx="3.5" ry="2.3" fill="#737f89"/>
<use href="#boltf" x="975" y="762"/><ellipse cx="973" cy="751" rx="3.5" ry="2.3" fill="#737f89"/>

<!-- lower-right block -->
<path d="M1093 731L1118 726L1123 750L1097 754z" fill="#c6d1da"/>
<path d="M1175 719L1198 716L1203 740L1176 744z" fill="#c6d1da"/>
<path d="M1097 754L1203 740L1203 752L1098 764z" fill="#7b8791"/><path d="M1098 765L1203 753" stroke="#3a2a1c"/>
<path d="M1120 715L1173 708L1176 745L1123 753z" fill="#7b8791"/>
<path d="M1117 691L1168 684L1173 708L1120 715z" fill="#c6d1da"/>
<circle cx="1147" cy="728" r="5.5" fill="#dde4ea"/>
<use href="#boltf" x="1107" y="735"/><ellipse cx="1108" cy="745" rx="3.5" ry="2.3" fill="#737f89"/>
<use href="#boltf" x="1188" y="733"/><ellipse cx="1186" cy="724" rx="3.5" ry="2.3" fill="#737f89"/>

<!-- bottom center clamp -->
<ellipse cx="1051" cy="800" rx="17" ry="12" fill="#d6dfe6"/>
<path d="M1043 793h16l4 6-6 7h-13l-5-6z" fill="#7f8a94"/>
<path d="M1042 767h15v30h-15z" fill="#7b8791"/><path d="M1046 767h5v30h-5z" fill="#a4afb7"/>
<path d="M1027 755L1073 751L1073 767L1060 772L1030 776z" fill="#8a949c"/><path d="M1030 772h12v4h-12zM1057 769h10v3h-10z" fill="#dce4ea"/>
<path d="M1010 673L1053 668L1070 748L1027 753z" fill="#c6d3de"/>
<path d="M1027 753L1070 748L1073 751L1027 757z" fill="#f1f5f8"/>
<ellipse cx="1040" cy="712" rx="16" ry="5" fill="#6f7a84"/>
<path d="M1024 692l7-5h17l7 6-1 14-15 5-14-5z" fill="#7f8a94"/><path d="M1031 689l8 3 1 19-9-4z" fill="#9aa6af"/>
<ellipse cx="1039" cy="684" rx="9" ry="8" fill="#8b97a1"/><ellipse cx="1039" cy="681" rx="7" ry="3.5" fill="#c3ccd4"/>
</g>
<!-- window edges -->
<path d="M.5 0V1040M1778.5 0V1040" stroke="#3a4c58"/>
<rect x="0" y="1037" width="1779" height="3" fill="#2e4b5c"/>
<rect x="0" y="1031" width="1778" height="6" fill="#cfe0ee"/>
</svg>
</div></body></html>
